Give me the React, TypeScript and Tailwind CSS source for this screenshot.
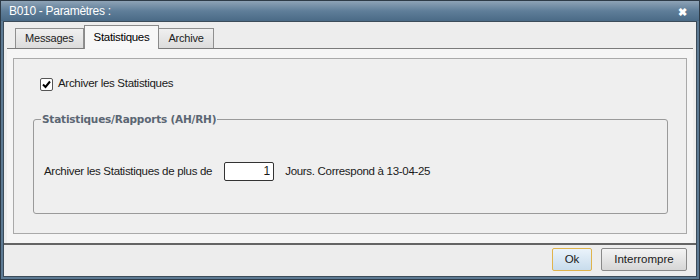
import React, { useState } from 'react';

const tabs = ['Messages', 'Statistiques', 'Archive'];

const App: React.FC = () => {
  const [active, setActive] = useState('Statistiques');
  const [archive, setArchive] = useState(true);
  const [days, setDays] = useState('1');

  return (
    <div
      className="w-[700px] h-[280px] flex flex-col bg-[#5d7a93] border border-[#2e3b47] text-[11px] text-[#1a1a1a]"
      style={{ fontFamily: '"Liberation Sans", Arial, sans-serif' }}
    >
      {/* title bar */}
      <div className="h-[20px] shrink-0 flex items-center justify-between pl-[8px] pr-[12px] bg-gradient-to-b from-[#8ea3b6] via-[#5f7e99] to-[#4a6a86] text-white text-[12px]">
        <span className="tracking-[-0.3px]">B010 - Paramètres :</span>
        <span className="text-[11px] font-bold leading-none mt-[3px]">✖</span>
      </div>

      <div className="flex-1 flex flex-col mx-[2px] mb-[2px] bg-[#ededed] border border-[#3c4c5a]">
        {/* tab strip */}
        <div className="h-[26px] flex items-end pl-[11px]">
          {tabs.map((t) => {
            const sel = t === active;
            return (
              <button
                key={t}
                onClick={() => setActive(t)}
                className={
                  sel
                    ? 'h-[24px] px-[9px] -mb-px z-10 bg-[#f7f7f7] border border-b-0 border-[#8a8a8a] text-[11.5px] tracking-[-0.3px] text-black'
                    : 'h-[20px] px-[9px] bg-gradient-to-b from-[#f0f0f0] to-[#dcdcdc] border border-b-0 border-[#8f8f8f] text-[11px] tracking-[-0.2px] text-[#222] -ml-px first:ml-0'
                }
              >
                {t}
              </button>
            );
          })}
        </div>

        {/* tab page */}
        <div className="h-[195px] mx-[3px] border-t border-[#7a7a7a] bg-[#f5f5f5] px-[6px] pt-[9px] pb-[9px] flex">
          <div className="flex-1 border border-[#a9a9a9] bg-[#efefef] pl-[26px] pr-[18px] pt-[18px]">
            <label className="flex items-center gap-[5px] h-[14px] cursor-pointer">
              <span
                onClick={() => setArchive(!archive)}
                className="w-[13px] h-[13px] rounded-[2px] border border-[#555] bg-white flex items-center justify-center"
              >
                {archive && (
                  <svg width="11" height="11" viewBox="0 0 11 11">
                    <path d="M2 5.5 L4.5 8 L9 2.5" fill="none" stroke="#000" strokeWidth="2" />
                  </svg>
                )}
              </span>
              <span className="text-[11.5px] tracking-[-0.3px]">Archiver les Statistiques</span>
            </label>

            <fieldset className="mt-[21px] ml-[-7px] h-[102px] border border-[#9a9a9a] rounded-[3px] px-[10px] min-w-0">
              <legend
                className="px-[1px] ml-[-3px] text-[10.5px] font-bold text-[#5b6673] tracking-[-0.2px]"
                style={{ fontFamily: '"DejaVu Sans", Verdana, sans-serif' }}
              >
                Statistiques/Rapports (AH/RH)
              </legend>
              <div className="flex items-center mt-[34px]">
                <span className="text-[11.5px] tracking-[-0.3px]">Archiver les Statistiques de plus de</span>
                <input
                  value={days}
                  onChange={(e) => setDays(e.target.value)}
                  className="ml-[12px] w-[50px] h-[19px] border border-[#333] rounded-[2px] bg-white text-right pr-[3px] text-[12px] outline-none"
                />
                <span className="ml-[11px] text-[11.5px] tracking-[-0.3px]">Jours. Correspond à 13-04-25</span>
              </div>
            </fieldset>
          </div>
        </div>

        {/* footer */}
        <div className="flex-1 border-t-2 border-[#646464] flex justify-end items-start pt-[3px] pr-[9px] gap-[9px]">
          <button className="w-[40px] h-[23px] rounded-[2px] border border-[#e0b44c] bg-gradient-to-b from-[#eaf3fb] to-[#c8dcec] text-[11.5px]">
            Ok
          </button>
          <button className="w-[86px] h-[23px] rounded-[2px] border border-[#8a8a8a] bg-gradient-to-b from-[#f4f4f4] to-[#d6d6d6] text-[11.5px]">
            Interrompre
          </button>
        </div>
      </div>
    </div>
  );
};

export default App;
